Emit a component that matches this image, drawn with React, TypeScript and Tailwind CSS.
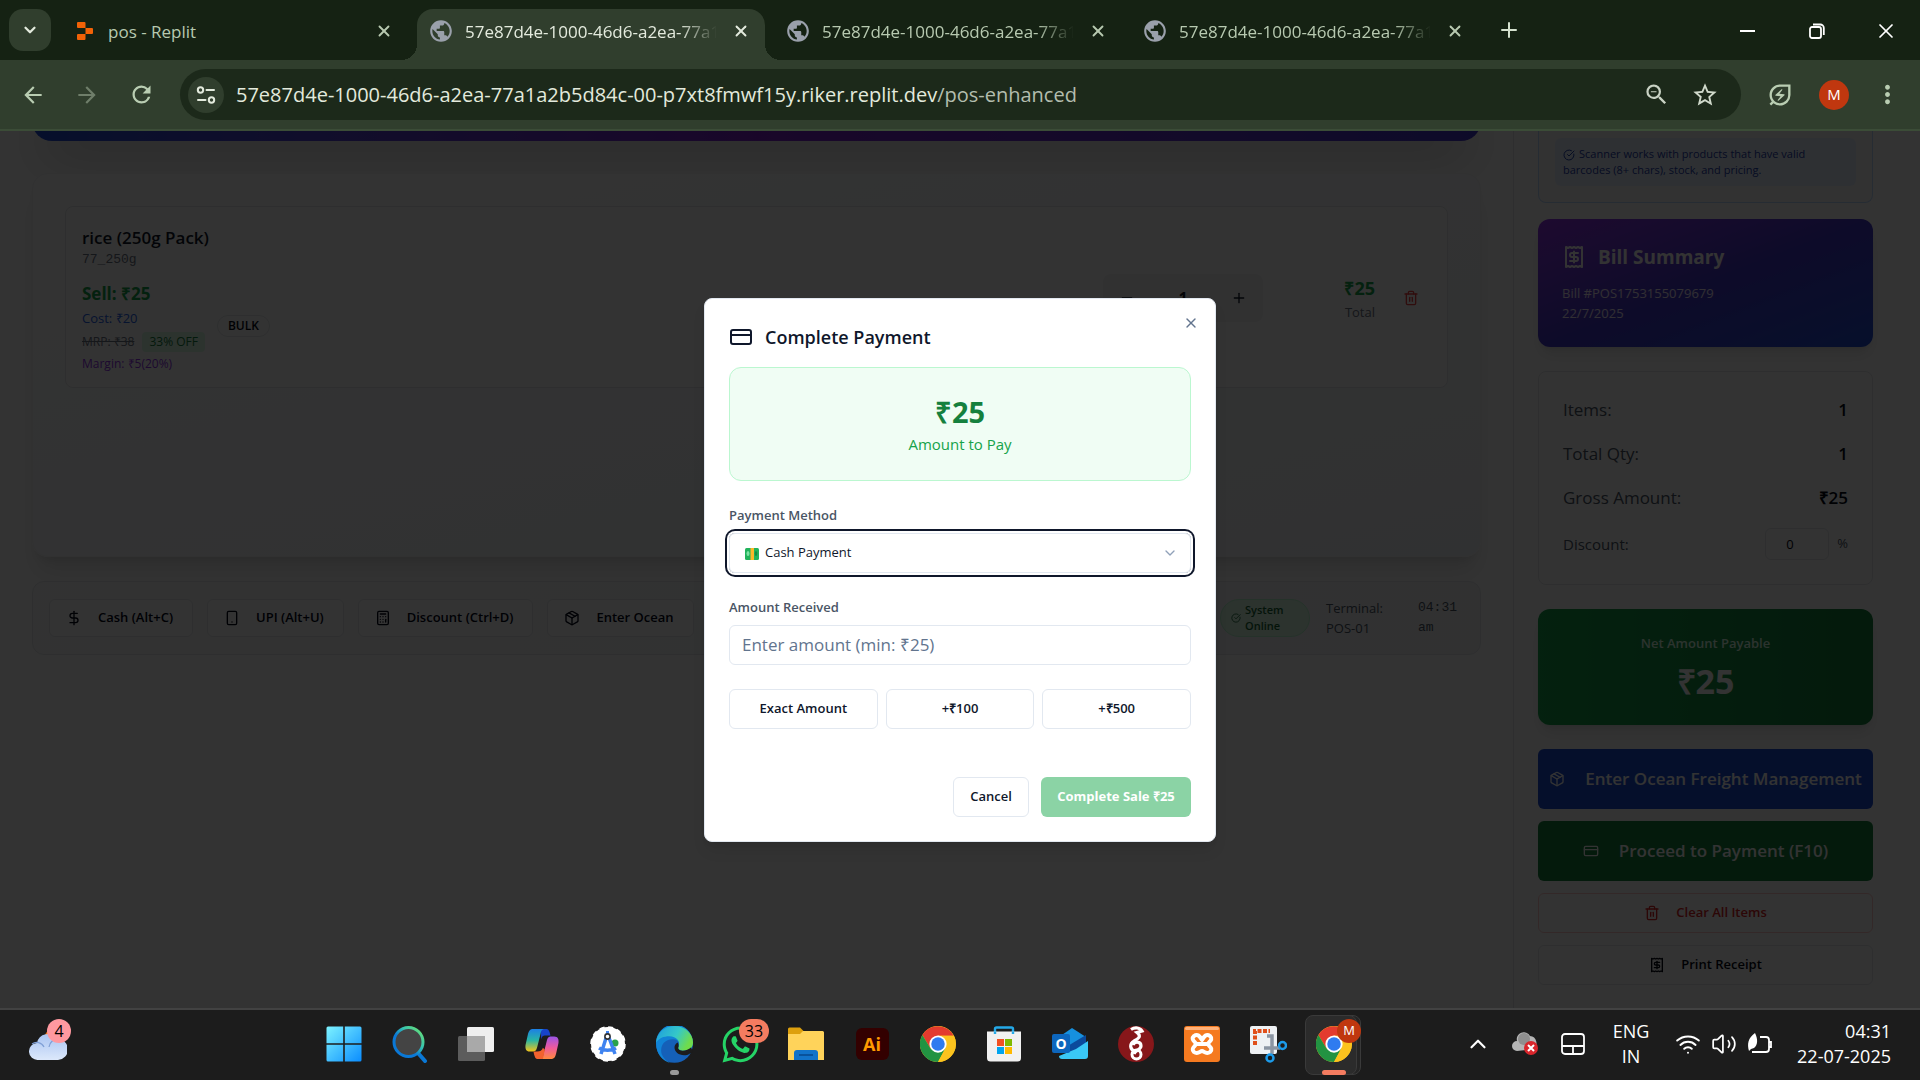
import React from "react";
import {
  Calculator,
  ChevronDown,
  ChevronUp,
  CircleCheckBig,
  CreditCard,
  DollarSign,
  Minus,
  Package,
  Plus,
  Receipt,
  Smartphone,
  Trash2,
  Volume2,
  Wifi,
  X,
} from "lucide-react";
import {
  MdArrowBack,
  MdArrowForward,
  MdMoreVert,
  MdOutlineEnergySavingsLeaf,
  MdPublic,
  MdRefresh,
  MdStarBorder,
  MdZoomOut,
} from "react-icons/md";
import { FaWhatsapp } from "react-icons/fa";

const SESSION = "57e87d4e-1000-46d6-a2ea-77a1a2b5d84c";

/* ---------- Browser chrome ---------- */

function ReplitLogo() {
  return (
    <svg width="16" height="20" viewBox="0 0 16 20" aria-hidden="true">
      <path fill="#f26207" d="M1 1h6.5a1 1 0 0 1 1 1v5H1a1 1 0 0 1-1-1V2a1 1 0 0 1 1-1zM8.500 7h6.500a1 1 0 0 1 1 1v4a1 1 0 0 1-1 1H8.500zM1 13h7.500v5a1 1 0 0 1-1 1H1a1 1 0 0 1-1-1v-4a1 1 0 0 1 1-1z" />
    </svg>
  );
}

function TuneIcon() {
  return (
    <svg width="20" height="20" viewBox="0 0 20 20" fill="none" stroke="#e3eadd" strokeWidth="2" aria-hidden="true">
      <circle cx="4.500" cy="5" r="2.700" />
      <path d="M10.500 5H18M2 15h7.500" strokeLinecap="round" />
      <circle cx="15.500" cy="15" r="2.700" />
    </svg>
  );
}

function CloseTab({ label }: { label: string }) {
  return (
    <button aria-label={label} className="flex size-6 shrink-0 items-center justify-center">
      <X size={18} strokeWidth={2.5} />
    </button>
  );
}

function SessionTab({ active = false }: { active?: boolean }) {
  return (
    <div
      className={
        active
          ? "relative flex h-[51px] w-[348px] items-center rounded-t-2xl bg-[#303e2d] pb-2 pl-[11px] pr-3 text-[#e3eadd]"
          : "flex h-[51px] w-[357px] items-center pb-2 pl-5 text-[#b7c9b0]"
      }
    >
      {active && (
        <>
          <span className="absolute -left-4 bottom-0 size-4 bg-[radial-gradient(circle_at_0_0,#152213_16px,#303e2d_16px)]" />
          <span className="absolute -right-4 bottom-0 size-4 bg-[radial-gradient(circle_at_100%_0,#152213_16px,#303e2d_16px)]" />
        </>
      )}
      <MdPublic size={26} className="mr-[11px] shrink-0 text-[#9aa0ab]" />
      <span className="w-[252px] shrink-0 overflow-hidden whitespace-nowrap pt-0.5 text-[17px] [mask-image:linear-gradient(to_right,black_85%,transparent)]">
        {SESSION}
      </span>
      <span className="ml-3 flex">
        <CloseTab label="Close tab" />
      </span>
      {!active && <span className="ml-4 h-6 w-0.5 bg-[#303e2d]" />}
    </div>
  );
}

function TabStrip() {
  return (
    <div className="flex h-[60px] items-end bg-[#152213] pl-[9px]">
      <button aria-label="Search tabs" className="mb-[9px] flex size-[42px] items-center justify-center rounded-[14px] bg-[#303e2d] text-[#e3eadd]">
        <ChevronDown size={18} strokeWidth={3} />
      </button>
      <div className="flex h-[51px] w-[366px] items-center pb-2 pl-[26px] text-[#b7c9b0]">
        <ReplitLogo />
        <span className="ml-[15px] grow pt-0.5 text-[17px]">pos - Replit</span>
        <span className="mr-[21px] flex">
          <CloseTab label="Close pos - Replit" />
        </span>
      </div>
      <SessionTab active />
      <SessionTab />
      <SessionTab />
      <button aria-label="New tab" className="mb-[18px] ml-[18px] text-[#d5e2cf]">
        <Plus size={24} />
      </button>
      <div className="mb-2 ml-auto flex h-[43px] items-center text-white">
        <button aria-label="Minimize" className="flex w-[69px] justify-center">
          <span className="h-0.5 w-[15px] bg-white" />
        </button>
        <button aria-label="Restore" className="flex w-[69px] justify-center">
          <svg width="16" height="16" viewBox="0 0 16 16" fill="none" stroke="currentColor" strokeWidth="1.800">
            <rect x="1" y="4" width="11" height="11" rx="2" />
            <path d="M4 1.500h7A3.500 3.500 0 0 1 14.800 5v7" />
          </svg>
        </button>
        <button aria-label="Close" className="flex w-[69px] justify-center">
          <X size={24} strokeWidth={1.700} />
        </button>
      </div>
    </div>
  );
}

function Toolbar() {
  return (
    <div className="flex h-[71px] shrink-0 items-center border-b-2 border-[#3b4c37] bg-[#303e2d] pl-5 pr-[18px] text-[#b9cdb2]">
      <button aria-label="Back"><MdArrowBack size={26} /></button>
      <button aria-label="Forward" className="ml-7 text-[#6f7e6a]"><MdArrowForward size={26} /></button>
      <button aria-label="Reload" className="ml-7"><MdRefresh size={27} /></button>
      <div className="ml-[25px] flex h-[51px] grow items-center rounded-full bg-[#1c291a] pl-2">
        <button aria-label="Site information" className="flex size-9 items-center justify-center rounded-full bg-[#303e2d]">
          <TuneIcon />
        </button>
        <div className="ml-3 grow whitespace-nowrap text-[20px] text-[#e3eadd]">
          {SESSION}-00-p7xt8fmwf15y.riker.replit.dev<span className="text-[#b3bdae]">/pos-enhanced</span>
        </div>
        <button aria-label="Zoom" className="text-[#c9d2c4]"><MdZoomOut size={27} /></button>
        <button aria-label="Bookmark" className="ml-[21px] mr-[22px] text-[#d0d9cb]"><MdStarBorder size={28} /></button>
      </div>
      <button aria-label="Energy saver" className="ml-[25px]"><MdOutlineEnergySavingsLeaf size={28} /></button>
      <button aria-label="Profile" className="ml-[25px] flex size-[30px] items-center justify-center rounded-full bg-[#c0370f] text-[15px] font-medium text-white">M</button>
      <button aria-label="Menu" className="ml-6"><MdMoreVert size={29} /></button>
    </div>
  );
}

/* ---------- Point of sale page ---------- */

function CartItem() {
  return (
    <div className="flex items-center rounded-lg border border-gray-200 bg-white px-4 pb-[15px] pt-[17px]">
      <div>
        <h3 className="text-[17px]/7 font-semibold text-gray-900">rice (250g Pack)</h3>
        <p className="font-['Liberation_Mono'] text-[13px]/4 text-gray-500">77_250g</p>
        <div className="mt-3 flex items-center gap-3">
          <div>
            <p className="text-[17px]/7 font-bold text-[#16a34a]">Sell: ₹25</p>
            <p className="text-[13px]/5 text-[#2563eb]">Cost: ₹20</p>
            <p className="mt-1 flex items-center gap-2 text-[12px]/5">
              <s className="text-gray-500">MRP: ₹38</s>
              <span className="rounded bg-green-100 px-[7px] text-[#15803d]">33% OFF</span>
            </p>
            <p className="mt-1 text-[12px]/4 text-[#9333ea]">Margin: ₹5(20%)</p>
          </div>
          <span className="rounded-full border border-gray-200 px-2.5 text-[12px]/5 font-semibold text-gray-950">BULK</span>
        </div>
      </div>
      <div className="ml-auto flex h-12 w-[160px] items-center justify-between rounded-lg bg-gray-100 px-4 text-gray-900">
        <button aria-label="Decrease quantity"><Minus size={16} /></button>
        <span className="text-[16px] font-bold">1</span>
        <button aria-label="Increase quantity"><Plus size={16} /></button>
      </div>
      <div className="w-28 text-right">
        <p className="text-[18px]/7 font-bold text-[#16a34a]">₹25</p>
        <p className="text-[13px]/5 text-gray-500">Total</p>
      </div>
      <button aria-label="Remove item" className="ml-7 mr-3 text-[#ef4444]"><Trash2 size={16} /></button>
    </div>
  );
}

function ActionButton({ icon, children }: { icon: React.ReactNode; children: React.ReactNode }) {
  return (
    <button className="flex h-[38px] items-center gap-4 rounded-md border border-gray-200 bg-white pl-4 pr-[19px] text-[13px] font-semibold text-slate-950">
      {icon}
      {children}
    </button>
  );
}

function ActionBar() {
  return (
    <div className="mt-6 flex h-[74px] items-center gap-[14px] rounded-xl border border-gray-200 bg-gradient-to-r from-gray-50 to-gray-100 px-4">
      <ActionButton icon={<DollarSign size={16} />}>Cash (Alt+C)</ActionButton>
      <ActionButton icon={<Smartphone size={16} />}>UPI (Alt+U)</ActionButton>
      <ActionButton icon={<Calculator size={16} />}>Discount (Ctrl+D)</ActionButton>
      <ActionButton icon={<Package size={16} />}>Enter Ocean</ActionButton>
      <div className="ml-auto flex items-center gap-4 text-[13px]/5 text-gray-600">
        <span className="flex w-[90px] items-center gap-1 rounded-full border border-green-200 bg-green-100 px-2.5 py-0.5 text-[11px]/4 font-semibold text-[#166534]">
          <CircleCheckBig size={10} className="shrink-0" />
          System Online
        </span>
        <span className="w-[76px]">Terminal: POS-01</span>
        <span className="w-[46px] font-['Liberation_Mono']">04:31 am</span>
      </div>
    </div>
  );
}

function SummaryRow({ label, value }: { label: string; value: string }) {
  return (
    <div className="flex justify-between text-[17px]/7">
      <span className="text-gray-600">{label}</span>
      <span className="font-semibold text-gray-950">{value}</span>
    </div>
  );
}

function Sidebar() {
  return (
    <aside className="w-[407px] shrink-0 border-l border-gray-200 bg-white pl-6 pr-[47px]">
      <div className="rounded-b-lg border border-t-0 border-blue-200 bg-gray-50 px-4 pb-4 pt-[7px]">
        <p className="rounded-md bg-blue-100/60 p-2 text-[11px]/4 text-[#1e40af]">
          <CircleCheckBig size={12} className="mr-1 inline" />
          Scanner works with products that have valid <br />
          barcodes (8+ chars), stock, and pricing.
        </p>
      </div>

      <section className="mt-4 h-32 rounded-xl bg-gradient-to-br from-[#9333ea] via-[#4338ca] to-[#1d4ed8] p-6 text-white shadow-lg">
        <h2 className="flex items-center gap-3 text-[19px]/7 font-bold"><Receipt size={24} />Bill Summary</h2>
        <p className="mt-3 text-[13px]/5 text-purple-100">Bill #POS1753155079679</p>
        <p className="text-[13px]/5 text-purple-100">22/7/2025</p>
      </section>

      <section className="mt-6 flex flex-col gap-4 rounded-lg border border-gray-200 px-6 pb-6 pt-6">
        <SummaryRow label="Items:" value="1" />
        <SummaryRow label="Total Qty:" value="1" />
        <SummaryRow label="Gross Amount:" value="₹25" />
        <div className="flex items-center text-[15px] text-gray-600">
          <label htmlFor="discount" className="grow">Discount:</label>
          <input id="discount" defaultValue="0" className="h-8 w-16 rounded-md border border-gray-200 pl-5 text-[13px] text-gray-950" />
          <span className="ml-2 text-[13px]">%</span>
        </div>
      </section>

      <section className="mt-6 flex h-[116px] flex-col items-center rounded-xl bg-gradient-to-r from-[#16a34a] to-[#15803d] pt-6 text-white shadow-lg">
        <p className="text-[13px]/5 font-semibold text-green-100">Net Amount Payable</p>
        <p className="mt-2 text-[34px]/10 font-bold">₹25</p>
      </section>

      <div className="mt-6 flex flex-col gap-3">
        <button className="flex h-[60px] items-center justify-center gap-5 whitespace-nowrap rounded-md bg-[#1d4ed8] text-[17px] font-semibold text-white">
          <Package size={16} />Enter Ocean Freight Management
        </button>
        <button className="flex h-[60px] items-center justify-center gap-5 rounded-md bg-[#15803d] text-[17px] font-semibold text-white">
          <CreditCard size={16} />Proceed to Payment (F10)
        </button>
        <button className="flex h-10 items-center justify-center gap-4 rounded-md border border-red-200 text-[13px] font-semibold text-[#dc2626]">
          <Trash2 size={16} />Clear All Items
        </button>
        <button className="flex h-10 items-center justify-center gap-4 rounded-md border border-gray-200 text-[13px] font-semibold text-gray-950">
          <Receipt size={16} />Print Receipt
        </button>
      </div>
    </aside>
  );
}

/* ---------- Payment dialog ---------- */

function CashIcon() {
  return (
    <svg width="14" height="12" viewBox="0 0 14 12" className="absolute left-4 top-[15px]" aria-hidden="true">
      <rect width="14" height="12" rx="1.500" fill="#21b35b" />
      <ellipse cx="3" cy="5.500" rx="1.500" ry="2.500" fill="#7ee2a4" />
      <ellipse cx="11" cy="5.500" rx="1.200" ry="2.500" fill="#168a43" />
      <rect x="5.500" width="3.500" height="12" fill="#fbb829" />
    </svg>
  );
}

const OUTLINE_BUTTON =
  "h-10 rounded-md border border-slate-200 bg-white text-[13px] font-semibold text-slate-900";

function PaymentDialog() {
  return (
    <div role="dialog" aria-labelledby="payment-title" className="relative w-full max-w-lg rounded-lg border border-slate-200 bg-white p-6 shadow-lg">
      <button aria-label="Close dialog" className="absolute right-4 top-4 text-slate-500"><X size={16} /></button>
      <h2 id="payment-title" className="flex items-center gap-3 text-[18px]/7 font-semibold text-slate-900">
        <CreditCard size={24} />Complete Payment
      </h2>
      <div className="mt-4 rounded-xl border border-[#bbf7d0] bg-green-50 p-6 text-center">
        <p className="text-[29px]/10 font-bold text-[#15803d]">₹25</p>
        <p className="text-[15px]/6 text-[#16a34a]">Amount to Pay</p>
      </div>
      <label htmlFor="method" className="mt-6 block text-[13px]/5 font-semibold text-gray-600">Payment Method</label>
      <div className="relative mt-2 rounded-md ring-2 ring-slate-900 ring-offset-2">
        <CashIcon />
        <select id="method" className="block h-10 w-full appearance-none rounded-md border border-slate-200 pl-[35px] text-[13px] text-slate-900 outline-none">
          <option>Cash Payment</option>
        </select>
        <ChevronDown size={16} className="pointer-events-none absolute right-[13px] top-3 text-slate-400" />
      </div>
      <label htmlFor="received" className="mt-6 block text-[13px]/5 font-semibold text-gray-600">Amount Received</label>
      <input id="received" placeholder="Enter amount (min: ₹25)" className="mt-2 block h-10 w-full rounded-md border border-slate-200 px-3 text-[17px] placeholder:text-slate-500" />
      <div className="mt-6 grid grid-cols-3 gap-2">
        <button className={OUTLINE_BUTTON}>Exact Amount</button>
        <button className={OUTLINE_BUTTON}>+₹100</button>
        <button className={OUTLINE_BUTTON}>+₹500</button>
      </div>
      <div className="mt-12 flex justify-end gap-3">
        <button className="h-10 w-[76px] rounded-md border border-slate-200 bg-white text-[13px] font-semibold text-slate-900">Cancel</button>
        <button disabled className="h-10 w-[150px] rounded-md bg-[#8bd3a5] text-[13px] font-bold text-white">Complete Sale ₹25</button>
      </div>
    </div>
  );
}

/* ---------- Taskbar ---------- */

function ChromeLogo() {
  return (
    <svg width="36" height="36" viewBox="0 0 48 48" aria-hidden="true">
      <circle cx="24" cy="24" r="24" fill="#fcc31e" />
      <path d="M24 13h20.800A24 24 0 0 0 3.200 12L14 30z" fill="#e33b2e" />
      <path d="M3.200 12A24 24 0 0 0 24 48l10-18-10 5-10-5z" fill="#229342" />
      <path d="M24 13h21.200A24 24 0 0 1 24 48l9.700-18.500z" fill="#fcc31e" />
      <circle cx="24" cy="24" r="11.500" fill="#fff" />
      <circle cx="24" cy="24" r="9" fill="#2f7bf0" />
    </svg>
  );
}

function WeatherIcon() {
  return (
    <svg width="38" height="34" viewBox="0 0 38 34" aria-hidden="true">
      <defs>
        <linearGradient id="cloud" x1="0" y1="0" x2="0" y2="1">
          <stop offset="0" stopColor="#a9c4f2" />
          <stop offset="1" stopColor="#dce8fb" />
        </linearGradient>
      </defs>
      <circle cx="25" cy="10" r="9" fill="#f27a1a" />
      <path d="M9 33a8 8 0 0 1-1-17 11 11 0 0 1 20-4 10 10 0 0 1 1 21z" fill="url(#cloud)" />
      <path d="M20 20a9 9 0 0 1 9-8M3 17a8 8 0 0 1 12 3" fill="none" stroke="#7f9fd6" strokeWidth="1.200" />
    </svg>
  );
}

function WindowsLogo() {
  return (
    <svg width="36" height="36" viewBox="0 0 36 36" aria-hidden="true">
      <defs>
        <linearGradient id="win" x1="0" y1="0" x2="1" y2="1">
          <stop offset="0" stopColor="#7df3ff" />
          <stop offset="1" stopColor="#0a8dff" />
        </linearGradient>
      </defs>
      <path fill="url(#win)" d="M2 .5h15.200v16.700H.5V2A1.500 1.500 0 0 1 2 .5zM18.800.5H34A1.500 1.500 0 0 1 35.500 2v15.200H18.800zM.5 18.800h16.700v16.700H2A1.500 1.500 0 0 1 .5 34zM18.800 18.800h16.700V34a1.500 1.500 0 0 1-1.500 1.500H18.800z" />
    </svg>
  );
}

function SearchLogo() {
  return (
    <svg width="36" height="38" viewBox="0 0 36 38" fill="none" aria-hidden="true">
      <defs>
        <linearGradient id="lens" x1="1" y1="0" x2="0" y2="1">
          <stop offset="0" stopColor="#6fe36b" />
          <stop offset=".35" stopColor="#37c4b0" />
          <stop offset=".6" stopColor="#0a78d6" />
        </linearGradient>
      </defs>
      <path d="m26 28 7 8" stroke="#0a78d6" strokeWidth="4" strokeLinecap="round" />
      <circle cx="16.500" cy="17" r="14.500" fill="#444" stroke="url(#lens)" strokeWidth="3" />
    </svg>
  );
}

function TaskViewLogo() {
  return (
    <svg width="36" height="36" viewBox="0 0 36 36" aria-hidden="true">
      <rect x="9" y="1" width="27" height="25" rx="1.500" fill="#efefef" />
      <rect x="0" y="10" width="27" height="25" rx="1.500" fill="#5c5c5c" />
      <rect x="9" y="10" width="18" height="16" fill="#a9a9a9" />
    </svg>
  );
}

function CopilotLogo() {
  return (
    <svg width="34" height="32" viewBox="0 0 36 34" aria-hidden="true">
      <defs>
        <linearGradient id="cpa" x1="0" y1="0" x2="0" y2="1">
          <stop offset="0" stopColor="#1c7fe6" />
          <stop offset=".5" stopColor="#28b5a5" />
          <stop offset="1" stopColor="#f5c518" />
        </linearGradient>
        <linearGradient id="cpb" x1="0" y1="0" x2="0" y2="1">
          <stop offset="0" stopColor="#9b54e8" />
          <stop offset=".5" stopColor="#ee5a9c" />
          <stop offset="1" stopColor="#ff8a3d" />
        </linearGradient>
      </defs>
      <path d="M17 1h5c3 0 4 2 5 7h-6c-2 0-3 1-4 4z" fill="#1743c9" />
      <path d="M9 1h12c-3 0-4 2-4.500 5L13 20c-1 4-2 5-5 5H5c-4 0-5-3-4.500-7L3 7c1-4 2-6 6-6z" fill="url(#cpa)" />
      <path d="M27 33H15c3 0 4-2 4.500-5L23 14c1-4 2-5 5-5h3c4 0 5 3 4.500 7L33 27c-1 4-2 6-6 6z" fill="url(#cpb)" />
      <path d="M19 33h-5c-3 0-4-2-5-8h4c3 0 5-1 6-4l2 2z" fill="#f2622e" />
    </svg>
  );
}

function AndroidStudioLogo() {
  return (
    <svg width="36" height="36" viewBox="0 0 36 36" fill="none" aria-hidden="true">
      <circle cx="18" cy="18" r="17" fill="#fff" />
      <circle cx="18" cy="18" r="16.500" stroke="#fff" strokeWidth="2.500" strokeDasharray="5 3.600" />
      <circle cx="25" cy="17" r="3.500" fill="#2aa24b" />
      <path d="M17 9 11 28M18 9l7 19M9 22c5 3 12 3 17 0" stroke="#3f83f0" strokeWidth="3.500" />
      <path d="M17.500 5v3" stroke="#3f83f0" strokeWidth="3" />
      <circle cx="17.500" cy="10.500" r="2.600" fill="#fff" stroke="#333" strokeWidth="1.600" />
    </svg>
  );
}

function EdgeLogo() {
  return (
    <svg width="37" height="37" viewBox="0 0 36 36" aria-hidden="true">
      <defs>
        <linearGradient id="edge" x1="0" y1="0" x2="1" y2=".4">
          <stop offset="0" stopColor="#1c9be0" />
          <stop offset=".6" stopColor="#35c8c8" />
          <stop offset="1" stopColor="#6fdc4c" />
        </linearGradient>
      </defs>
      <circle cx="18" cy="18" r="17.800" fill="#1560b8" />
      <path d="M0 17A18 18 0 0 1 36 16c0 6-5 8-10 8-4 0-5-2-4-4 2-4-1-7-6-7-6 0-11 4-11 11 0 5 4 10 10 12C6 35 0 26 0 17z" fill="#1183d6" />
      <path d="M0 16C1 6 9 0 18 0c11 0 18 8 18 16 0 6-5 8-10 8-4 0-5-2-4-4 2-5-2-10-9-10C7 10 3 12 0 16z" fill="url(#edge)" />
      <path d="M22 20c-1 2 0 4 4 4 3 0 6-1 8-3l2 4-5 3c-7 2-13-2-13-7 0-2 1-4 3-5 1 1 1 3 1 4z" fill="#1c1c1c" />
    </svg>
  );
}

function ExplorerLogo() {
  return (
    <svg width="36" height="34" viewBox="0 0 36 34" aria-hidden="true">
      <path d="M0 2a1.500 1.500 0 0 1 1.500-1.500H12l4 4h18A2 2 0 0 1 36 6v8H0z" fill="#dda00e" />
      <path d="M0 7h12l3-3h19.500A1.500 1.500 0 0 1 36 5.500V33H0z" fill="#ffd35a" />
      <path d="M6 33v-7a3 3 0 0 1 3-3h18a3 3 0 0 1 3 3v7z" fill="#1273c9" />
      <path d="M11 28h14" stroke="#0a4f96" strokeWidth="1.800" />
    </svg>
  );
}

function StoreLogo() {
  return (
    <svg width="36" height="36" viewBox="0 0 36 36" fill="none" aria-hidden="true">
      <path d="M9 8V3a1.500 1.500 0 0 1 1.500-1.500h15A1.500 1.500 0 0 1 27 3v5" stroke="#24a9e8" strokeWidth="2.400" />
      <path d="M1 5.500h34V32a3.500 3.500 0 0 1-3.500 3.500h-27A3.500 3.500 0 0 1 1 32z" fill="#f1f1f1" />
      <path d="M9 5.500V8M27 5.500V8" stroke="#24a9e8" strokeWidth="2.400" />
      <path d="M11 13h7v7h-7z" fill="#f25022" />
      <path d="M19 13h7v7h-7z" fill="#7fba00" />
      <path d="M11 21h7v7h-7z" fill="#00a4ef" />
      <path d="M19 21h7v7h-7z" fill="#ffb900" />
    </svg>
  );
}

function OutlookLogo() {
  return (
    <span className="relative flex">
      <svg width="36" height="32" viewBox="0 0 36 32" aria-hidden="true">
        <path d="M7 9 20 0l14 9v10L20 28 7 20z" fill="#1690de" />
        <path d="m14 19 20-12v10L20 27z" fill="#0b4a9c" />
        <path d="m24 21 12-8v15a3 3 0 0 1-3 3H10a3 3 0 0 1-3-3z" fill="#3ac8f6" />
        <rect x="0" y="6" width="18" height="19" rx="2" fill="#0d66bd" />
      </svg>
      <span className="absolute left-0 top-1.5 w-[18px] text-center text-[14px]/[19px] font-bold text-white">O</span>
    </span>
  );
}

function WireguardLogo() {
  return (
    <svg width="36" height="36" viewBox="0 0 36 36" fill="none" aria-hidden="true">
      <circle cx="18" cy="18" r="18" fill="#87171a" />
      <path d="M13 3.500c4-2.500 9-2 11 1.500l-5 1.500c5 4 1 6.500-3 8.500-5 3-4 9 1 10" stroke="#fff" strokeWidth="3.200" />
      <path d="M15 19c1-4 8-4 8 1 0 4-6 4-7 8" stroke="#fff" strokeWidth="3.200" />
      <circle cx="18.500" cy="28.500" r="4.500" stroke="#fff" strokeWidth="3" />
    </svg>
  );
}

function XamppLogo() {
  return (
    <svg width="36" height="36" viewBox="0 0 36 36" fill="none" aria-hidden="true">
      <rect width="36" height="36" rx="3" fill="#f57a20" />
      <rect x="1" y="1" width="34" height="3" rx="1.500" fill="#ffb27a" />
      <path d="M10 10c4-3 6 1 8 4 2-3 4-7 8-4 4 4-2 6-2 8s6 4 2 8c-4 3-6-1-8-1s-4 4-8 1c-4-4 2-6 2-8s-6-4-2-8zM13 18h10" stroke="#fff" strokeWidth="4" strokeLinejoin="round" />
    </svg>
  );
}

function SnipLogo() {
  return (
    <svg width="38" height="38" viewBox="0 0 38 38" fill="none" aria-hidden="true">
      <rect x="1" y="1" width="27" height="28" rx="2" fill="#eef1f4" />
      <path d="M6 20V6h15" stroke="#e04f1a" strokeWidth="4" strokeDasharray="4 1.500" />
      <path d="M18 11h5v18M15 23h16" stroke="#8b95a3" strokeWidth="3.500" />
      <circle cx="33.500" cy="20.500" r="3.500" stroke="#1c9bea" strokeWidth="2.500" />
      <circle cx="21" cy="33" r="3.500" stroke="#1c9bea" strokeWidth="2.500" />
    </svg>
  );
}

function TaskButton({ label, children }: { label: string; children: React.ReactNode }) {
  return (
    <button aria-label={label} className="relative flex h-[62px] w-[66px] items-center justify-center">
      {children}
    </button>
  );
}

function Taskbar() {
  return (
    <footer className="flex h-[72px] shrink-0 items-center border-t-2 border-[#424242] bg-[#1c1c1c] pb-0.5 text-white">
      <div className="flex w-[311px] pl-[29px]">
        <button aria-label="Weather" className="relative flex">
          <WeatherIcon />
          <span className="absolute -top-2 left-[18px] flex size-6 items-center justify-center rounded-full bg-[#ff99a0] text-[16px] text-black">4</span>
        </button>
      </div>
      <div className="flex">
        <TaskButton label="Start"><WindowsLogo /></TaskButton>
        <TaskButton label="Search"><SearchLogo /></TaskButton>
        <TaskButton label="Task view"><TaskViewLogo /></TaskButton>
        <TaskButton label="Copilot"><CopilotLogo /></TaskButton>
        <TaskButton label="Android Studio"><AndroidStudioLogo /></TaskButton>
        <TaskButton label="Edge">
          <EdgeLogo />
          <span className="absolute bottom-0 left-[29px] h-[5px] w-[9px] rounded-full bg-[#9a9a9a]" />
        </TaskButton>
        <TaskButton label="WhatsApp">
          <FaWhatsapp size={41} className="text-[#25d366]" />
          <span className="absolute left-8 top-1.5 flex h-6 w-[30px] items-center justify-center rounded-full bg-[#f47c60] text-[16px] text-black">33</span>
        </TaskButton>
        <TaskButton label="File Explorer"><ExplorerLogo /></TaskButton>
        <TaskButton label="Illustrator">
          <span className="flex h-8 w-[33px] items-center justify-center rounded-md bg-[#330000] text-[18px] font-bold text-[#ff9a00]">Ai</span>
        </TaskButton>
        <TaskButton label="Chrome"><ChromeLogo /></TaskButton>
        <TaskButton label="Microsoft Store"><StoreLogo /></TaskButton>
        <TaskButton label="Outlook"><OutlookLogo /></TaskButton>
        <TaskButton label="WireGuard"><WireguardLogo /></TaskButton>
        <TaskButton label="XAMPP"><XamppLogo /></TaskButton>
        <TaskButton label="Snipping Tool"><SnipLogo /></TaskButton>
        <TaskButton label="Chrome, 2 windows">
          <span className="absolute left-3 top-0.5 h-[60px] w-12 rounded-lg border border-[#3a3a3a] bg-[#242424]" />
          <span className="absolute left-1 top-0.5 h-[60px] w-[52px] rounded-lg border border-[#3a3a3a] bg-[#2b2b2b]" />
          <span className="relative"><ChromeLogo /></span>
          <span className="absolute left-9 top-1.5 flex size-6 items-center justify-center rounded-full bg-[#c0370f] text-[13px] font-medium text-white">M</span>
          <span className="absolute bottom-0 left-[21px] h-[5px] w-6 rounded-full bg-[#f47c60]" />
        </TaskButton>
      </div>
      <div className="ml-auto flex items-center pr-[29px] text-[18px]/[25px]">
        <button aria-label="Show hidden icons"><ChevronUp size={26} strokeWidth={2} /></button>
        <svg width="28" height="28" viewBox="0 0 28 28" className="ml-5" role="img" aria-label="OneDrive error">
          <path d="M6 21a5 5 0 0 1 0-10A7 7 0 0 1 19 6a7 7 0 0 1 3 13z" fill="#b5b5b5" />
          <circle cx="13" cy="9" r="6" fill="#8f8f8f" />
          <circle cx="20" cy="18" r="7" fill="#d9262c" />
          <path d="m17 15 6 6m0-6-6 6" stroke="#fff" strokeWidth="2" />
        </svg>
        <svg width="24" height="22" viewBox="0 0 24 22" fill="none" stroke="#fff" strokeWidth="1.800" className="ml-[22px]" role="img" aria-label="Touchpad">
          <rect x="1" y="1" width="22" height="20" rx="3" />
          <path d="M1 13h22M12 13v8" />
        </svg>
        <p className="ml-[26px] w-10 text-center">ENG<br />IN</p>
        <Wifi size={26} strokeWidth={1.800} className="ml-6" />
        <Volume2 size={26} strokeWidth={1.600} className="ml-2.5" />
        <svg width="26" height="24" viewBox="0 0 26 24" fill="none" className="ml-2.5" role="img" aria-label="Battery saver">
          <path d="M13 5h6a3 3 0 0 1 3 3v9a3 3 0 0 1-3 3H5M22 10h2v5h-2" stroke="#fff" strokeWidth="1.800" />
          <path d="M2 19C0 12 1 6 8 1c3 6 3 12-1 15l-3 1z" fill="#fff" />
        </svg>
        <p className="ml-6 text-right">04:31<br />22-07-2025</p>
      </div>
    </footer>
  );
}

export default function App() {
  return (
    <div className="flex h-screen flex-col overflow-hidden font-['Open_Sans',sans-serif]">
      <header className="shrink-0 bg-[#152213]">
        <TabStrip />
        <Toolbar />
      </header>
      <main className="relative min-h-0 grow overflow-hidden bg-white">
        <div className="flex h-full">
          <div className="min-w-0 grow px-8">
            <div className="-mt-10 h-[50px] rounded-b-[20px] bg-gradient-to-r from-[#1d4ed8] via-[#7e22ce] to-[#4338ca] shadow-2xl" />
            <section className="mt-8 h-[384px] rounded-2xl border border-gray-100 bg-gradient-to-br from-white to-slate-100 p-8 shadow-xl">
              <CartItem />
            </section>
            <ActionBar />
          </div>
          <Sidebar />
        </div>
        <div className="absolute inset-0 flex items-center justify-center bg-black/80">
          <PaymentDialog />
        </div>
      </main>
      <Taskbar />
    </div>
  );
}
